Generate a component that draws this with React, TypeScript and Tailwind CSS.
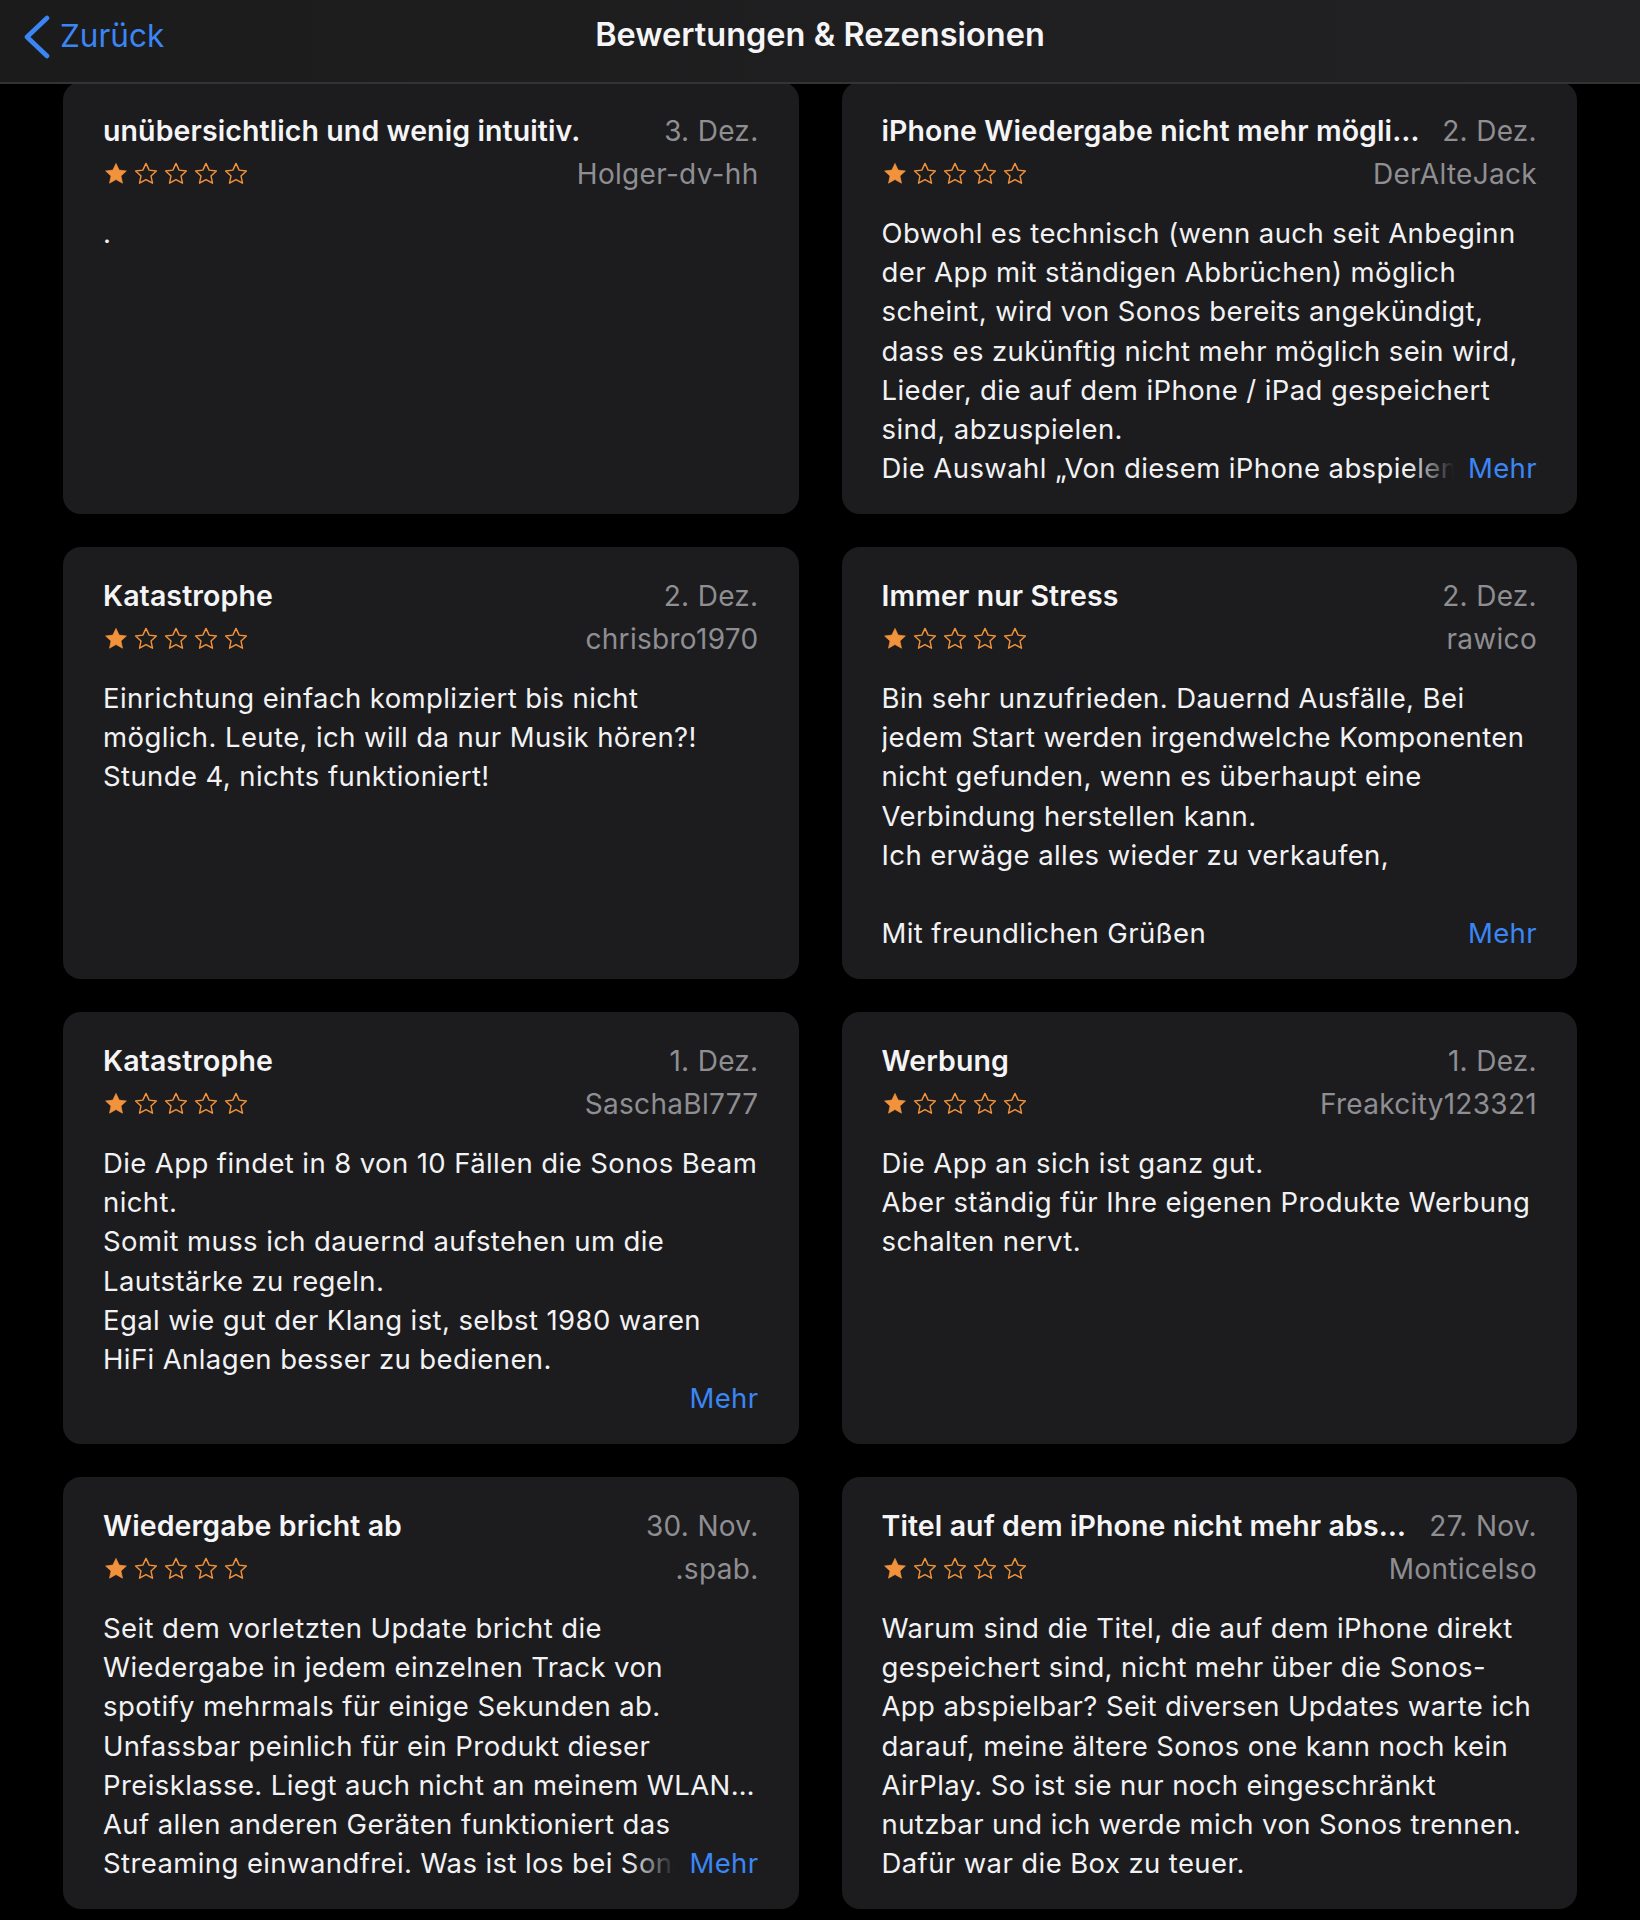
import React from "react";

type Review = {
  title: string;
  date: string;
  author: string;
  lines: string[];
  more?: boolean;
};

const reviews: Review[] = [
  {
    title: "unübersichtlich und wenig intuitiv.",
    date: "3. Dez.",
    author: "Holger-dv-hh",
    lines: ["."],
  },
  {
    title: "iPhone Wiedergabe nicht mehr mögli…",
    date: "2. Dez.",
    author: "DerAlteJack",
    lines: [
      "Obwohl es technisch (wenn auch seit Anbeginn",
      "der App mit ständigen Abbrüchen) möglich",
      "scheint, wird von Sonos bereits angekündigt,",
      "dass es zukünftig nicht mehr möglich sein wird,",
      "Lieder, die auf dem iPhone / iPad gespeichert",
      "sind, abzuspielen.",
      "Die Auswahl „Von diesem iPhone abspielen“ wird entfernt",
    ],
    more: true,
  },
  {
    title: "Katastrophe",
    date: "2. Dez.",
    author: "chrisbro1970",
    lines: [
      "Einrichtung einfach kompliziert bis nicht",
      "möglich. Leute, ich will da nur Musik hören?!",
      "Stunde 4, nichts funktioniert!",
    ],
  },
  {
    title: "Immer nur Stress",
    date: "2. Dez.",
    author: "rawico",
    lines: [
      "Bin sehr unzufrieden. Dauernd Ausfälle, Bei",
      "jedem Start werden irgendwelche Komponenten",
      "nicht gefunden, wenn es überhaupt eine",
      "Verbindung herstellen kann.",
      "Ich erwäge alles wieder zu verkaufen,",
      "",
      "Mit freundlichen Grüßen",
    ],
    more: true,
  },
  {
    title: "Katastrophe",
    date: "1. Dez.",
    author: "SaschaBl777",
    lines: [
      "Die App findet in 8 von 10 Fällen die Sonos Beam",
      "nicht.",
      "Somit muss ich dauernd aufstehen um die",
      "Lautstärke zu regeln.",
      "Egal wie gut der Klang ist, selbst 1980 waren",
      "HiFi Anlagen besser zu bedienen.",
      "",
    ],
    more: true,
  },
  {
    title: "Werbung",
    date: "1. Dez.",
    author: "Freakcity123321",
    lines: [
      "Die App an sich ist ganz gut.",
      "Aber ständig für Ihre eigenen Produkte Werbung",
      "schalten nervt.",
    ],
  },
  {
    title: "Wiedergabe bricht ab",
    date: "30. Nov.",
    author: ".spab.",
    lines: [
      "Seit dem vorletzten Update bricht die",
      "Wiedergabe in jedem einzelnen Track von",
      "spotify mehrmals für einige Sekunden ab.",
      "Unfassbar peinlich für ein Produkt dieser",
      "Preisklasse. Liegt auch nicht an meinem WLAN…",
      "Auf allen anderen Geräten funktioniert das",
      "Streaming einwandfrei. Was ist los bei Sonos?",
    ],
    more: true,
  },
  {
    title: "Titel auf dem iPhone nicht mehr abs…",
    date: "27. Nov.",
    author: "Monticelso",
    lines: [
      "Warum sind die Titel, die auf dem iPhone direkt",
      "gespeichert sind, nicht mehr über die Sonos-",
      "App abspielbar? Seit diversen Updates warte ich",
      "darauf, meine ältere Sonos one kann noch kein",
      "AirPlay. So ist sie nur noch eingeschränkt",
      "nutzbar und ich werde mich von Sonos trennen.",
      "Dafür war die Box zu teuer.",
    ],
  },
];

const STAR =
  "M12 2.2l2.9 6.2 6.7.8-5 4.6 1.4 6.7L12 17.1l-6 3.4 1.4-6.7-5-4.6 6.7-.8z";

const Stars = ({ count }: { count: number }) => (
  <div className="flex gap-[4px]">
    {[0, 1, 2, 3, 4].map((i) => (
      <svg key={i} width="26" height="26" viewBox="0 0 24 24">
        <path
          d={STAR}
          fill={i < count ? "#f2923a" : "none"}
          stroke="#f2923a"
          strokeWidth={i < count ? 0.6 : 1.3}
          strokeLinejoin="round"
        />
      </svg>
    ))}
  </div>
);

const Card = ({ r }: { r: Review }) => {
  const body = r.more ? r.lines.slice(0, -1) : r.lines;
  const last = r.more ? r.lines[r.lines.length - 1] : null;
  return (
    <div className="h-[432px] rounded-[18px] bg-[#1c1c1e] px-[40px] pt-[30px] pb-[25px]">
      <div className="flex items-baseline justify-between h-[38px] leading-[38px]">
        <h4 className="truncate text-[28.5px] font-semibold tracking-[0.1px] text-[#f5f5f7]">{r.title}</h4>
        <span className="ml-5 shrink-0 text-[28px] tracking-[0.3px] text-[#8e8e93]">{r.date}</span>
      </div>
      <div className="mt-[5px] flex h-[38px] items-center justify-between">
        <Stars count={1} />
        <span className="text-[28px] tracking-[0.3px] text-[#8e8e93]">{r.author}</span>
      </div>
      <div className="mt-[21px] h-[275px] overflow-hidden text-[27.5px] leading-[39.2px] tracking-[0.4px] text-[#f2f2f4]">
        {body.map((l, i) => (
          <div key={i} className="h-[39.2px] whitespace-nowrap overflow-hidden">
            {l}
          </div>
        ))}
        {last !== null && (
          <div className="flex h-[39.2px]">
            <div className="relative min-w-0 flex-1 overflow-hidden whitespace-nowrap">
              {last}
              <span className="absolute right-0 top-0 h-full w-[46px] bg-linear-to-r from-transparent to-[#1c1c1e]" />
            </div>
            <span className="shrink-0 pl-[14px] text-[#3b86f5]">Mehr</span>
          </div>
        )}
      </div>
    </div>
  );
};

export default function App() {
  return (
    <div
      className="min-h-[1920px] w-[1640px] bg-black"
      style={{ fontFamily: "Inter, 'Noto Sans', sans-serif" }}
    >
      <header className="relative z-10 h-[84px] border-b-2 border-[#333335] bg-linear-to-r from-[#1b1b1c] to-[#222224]">
        <div className="relative flex h-[70px] items-center justify-center">
          <button className="absolute left-[22px] top-[14px] flex items-center text-[31.5px] text-[#3b86f5]">
            <svg width="30" height="44" viewBox="0 0 30 44" className="mr-[8px]">
              <polyline
                points="25,3 5,22 25,41"
                fill="none"
                stroke="#3b86f5"
                strokeWidth="4.6"
                strokeLinecap="round"
                strokeLinejoin="round"
              />
            </svg>
            <span className="-mt-[2px]">Zurück</span>
          </button>
          <h1 className="text-[32.5px] font-semibold text-[#f5f5f7]">Bewertungen &amp; Rezensionen</h1>
        </div>
      </header>
      <main className="-mt-[2px] grid grid-cols-2 gap-x-[43px] gap-y-[33px] px-[63px] pb-[12px]">
        {reviews.map((r, i) => (
          <Card key={i} r={r} />
        ))}
      </main>
    </div>
  );
}
